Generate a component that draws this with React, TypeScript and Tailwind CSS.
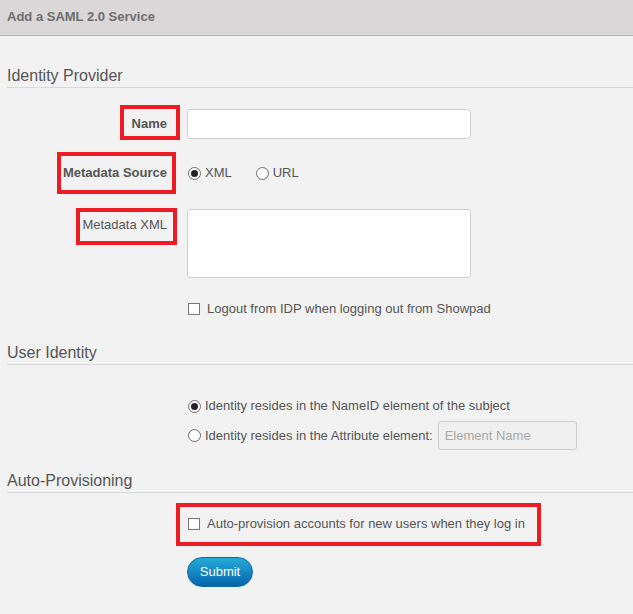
import React from "react";

const Radio = ({ checked }: { checked?: boolean }) => (
    <span className="inline-flex items-center justify-center w-[13px] h-[13px] rounded-full border border-[#6b6b6b] bg-white shrink-0">
        {checked && <span className="w-[7px] h-[7px] rounded-full bg-[#222]" />}
    </span>
);

const Checkbox = () => (
    <span className="inline-block w-[12px] h-[12px] border border-[#777] bg-white shrink-0" />
);

const Mark = ({ className }: { className: string }) => (
    <span className={`absolute border-[4px] border-[#ed1c24] pointer-events-none ${className}`} />
);

const Heading = ({ children, className }: { children: React.ReactNode; className: string }) => (
    <div className={`text-[16px] leading-[18px] text-[#555] pb-[2px] border-b border-[#d9d9d9] ${className}`}>{children}</div>
);

export default function App() {
    return (
        <div className="min-h-screen bg-[#f2f2f2] text-[13px] text-[#555] font-['Liberation_Sans',Arial,sans-serif]">
            <div className="h-[36px] bg-[#d9d7d8] border-b border-[#b3b3b3] pl-[7px] flex items-center">
                <span className="font-bold text-[13px] text-[#6d6d6d] pb-[1px]">Add a SAML 2.0 Service</span>
            </div>

            <div className="pl-[7px]">
                <Heading className="mt-[31px]">Identity Provider</Heading>

                {/* Name */}
                <div className="flex items-center mt-[21px]">
                    <div className="w-[160px] text-right">
                        <span className="relative font-bold leading-[15px]">
                            Name
                            <Mark className="-top-[11px] -bottom-[9px] -left-[12px] -right-[13px]" />
                        </span>
                    </div>
                    <input className="ml-[20px] w-[284px] h-[30px] bg-white border border-[#cfcfcf] rounded-[3px] outline-none" />
                </div>

                {/* Metadata source */}
                <div className="flex items-center mt-[24px] h-[20px]">
                    <div className="w-[160px] text-right">
                        <span className="relative font-bold leading-[15px]">
                            Metadata Source
                            <Mark className="-top-[13px] -bottom-[14px] -left-[6px] -right-[9px]" />
                        </span>
                    </div>
                    <div className="ml-[21px] flex items-center gap-[4px]">
                        <Radio checked />
                        <span>XML</span>
                    </div>
                    <div className="ml-[24px] flex items-center gap-[4px]">
                        <Radio />
                        <span>URL</span>
                    </div>
                </div>

                {/* Metadata XML */}
                <div className="flex items-start mt-[26px]">
                    <div className="w-[160px] text-right pt-[6px]">
                        <span className="relative leading-[15px]">
                            Metadata XML
                            <Mark className="-top-[9px] -bottom-[13px] -left-[6px] -right-[10px]" />
                        </span>
                    </div>
                    <textarea className="ml-[20px] w-[284px] h-[69px] bg-white border border-[#cfcfcf] rounded-[3px] outline-none resize-none" />
                </div>

                <div className="flex items-center gap-[7px] ml-[181px] mt-[23px] h-[16px]">
                    <Checkbox />
                    <span>Logout from IDP when logging out from Showpad</span>
                </div>

                <Heading className="mt-[27px]">User Identity</Heading>

                <div className="ml-[181px] mt-[31px] flex items-center gap-[4px] h-[20px]">
                    <Radio checked />
                    <span>Identity resides in the NameID element of the subject</span>
                </div>
                <div className="ml-[181px] mt-[5px] flex items-center">
                    <Radio />
                    <span className="ml-[4px]">Identity resides in the Attribute element:</span>
                    <input
                        disabled
                        placeholder="Element Name"
                        className="ml-[5px] w-[139px] h-[29px] px-[6px] bg-[#f0f0f0] border border-[#cfcfcf] rounded-[3px] text-[13px] placeholder:text-[#a8a8a8]"
                    />
                </div>

                <Heading className="mt-[22px]">Auto-Provisioning</Heading>

                <div className="flex ml-[181px] mt-[23px]">
                    <div className="relative flex items-center gap-[7px] h-[16px]">
                        <Checkbox />
                        <span>Auto-provision accounts for new users when they log in</span>
                        <Mark className="-top-[13px] -bottom-[14px] -left-[12px] -right-[16px]" />
                    </div>
                </div>

                <button className="block ml-[180px] mt-[25px] w-[66px] h-[30px] rounded-full text-white text-[13px] border border-[#0b6aa6] bg-gradient-to-b from-[#25abd9] to-[#0865ab]">
                    Submit
                </button>
            </div>
        </div>
    );
}
